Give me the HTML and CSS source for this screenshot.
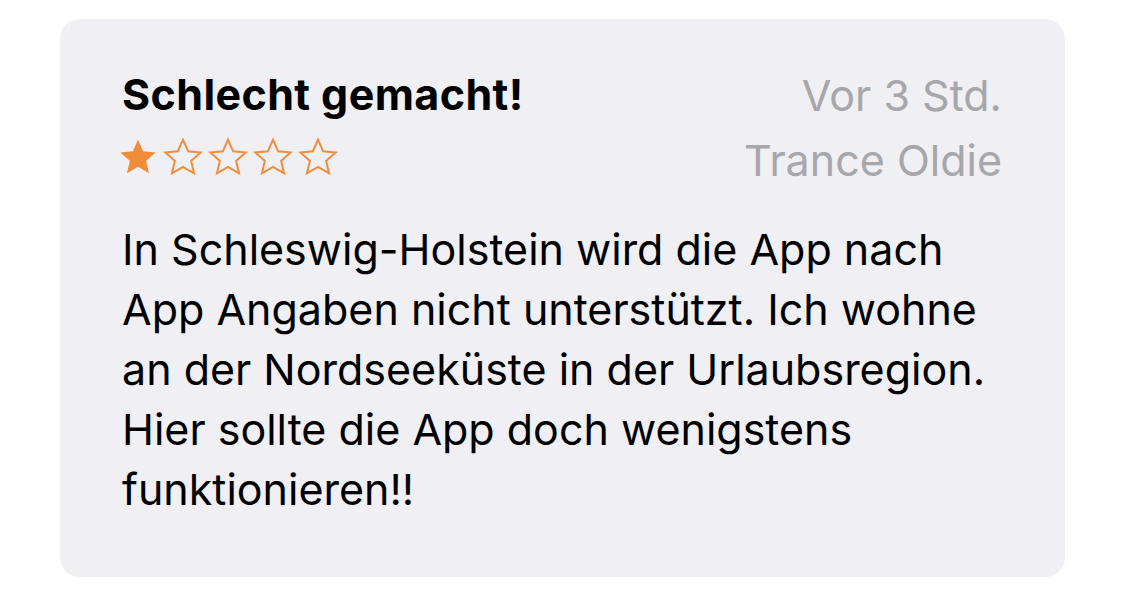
FILE: index.html
```html
<!DOCTYPE html>
<html lang="de">
<head>
    <meta charset="UTF-8">
    <meta name="viewport" content="width=device-width, initial-scale=1.0">
    <title>Bewertung</title>
    <link rel="stylesheet" href="styles.css">
</head>
<body>

    <div class="review">
        <!-- Header: title + stars on the left, date + author on the right -->
        <div class="review-head">
            <div class="review-left">
                <h2 class="review-title">Schlecht gemacht!</h2>
                <div class="stars">
                    <svg class="star" viewBox="0 0 24 24"><path class="full" d="M12 1.6l3.1 7 7.5.7-5.7 5 1.7 7.5L12 17.9l-6.6 3.9 1.7-7.5-5.7-5 7.5-.7z"/></svg>
                    <svg class="star" viewBox="0 0 24 24"><path class="empty" d="M12 1.6l3.1 7 7.5.7-5.7 5 1.7 7.5L12 17.9l-6.6 3.9 1.7-7.5-5.7-5 7.5-.7z"/></svg>
                    <svg class="star" viewBox="0 0 24 24"><path class="empty" d="M12 1.6l3.1 7 7.5.7-5.7 5 1.7 7.5L12 17.9l-6.6 3.9 1.7-7.5-5.7-5 7.5-.7z"/></svg>
                    <svg class="star" viewBox="0 0 24 24"><path class="empty" d="M12 1.6l3.1 7 7.5.7-5.7 5 1.7 7.5L12 17.9l-6.6 3.9 1.7-7.5-5.7-5 7.5-.7z"/></svg>
                    <svg class="star" viewBox="0 0 24 24"><path class="empty" d="M12 1.6l3.1 7 7.5.7-5.7 5 1.7 7.5L12 17.9l-6.6 3.9 1.7-7.5-5.7-5 7.5-.7z"/></svg>
                </div>
            </div>
            <div class="review-meta">
                <span class="review-date">Vor 3 Std.</span>
                <span class="review-author">Trance Oldie</span>
            </div>
        </div>

        <p class="review-body">In Schleswig-Holstein wird die App nach App Angaben nicht unterstützt. Ich wohne an der Nordseeküste in der Urlaubsregion. Hier sollte die App doch wenigstens funktionieren!!</p>
    </div>

</body>
</html>
```

FILE: styles.css
```css
/* Global styles */
body, html {
    margin: 0;
    padding: 0;
    background-color: #ffffff;
    font-family: Inter, "Noto Sans", sans-serif;
}

/* Review card */
.review {
    margin: 19px 0 0 60px;
    width: 1005px;
    height: 558px;
    box-sizing: border-box;
    padding: 48px 63px 0 62px;
    background-color: #efeff4;
    border-radius: 20px;
}

.review-head {
    display: flex;
    justify-content: space-between;
}

.review-title {
    margin: 2px 0 0 0;
    font-size: 43px;
    font-weight: 700;
    letter-spacing: 0.4px;
    line-height: 50px;
    color: #000000;
}

/* Star rating */
.stars {
    display: flex;
    gap: 5px;
    margin: 18px 0 0 -4px;
}

.star {
    display: block;
    width: 40px;
    height: 40px;
}

.star .full {
    fill: #f28c38;
}

.star .empty {
    fill: none;
    stroke: #f28c38;
    stroke-width: 1.2;
}

.review-meta {
    display: flex;
    flex-direction: column;
    align-items: flex-end;
    font-size: 43px;
    line-height: 65px;
    color: #a6a6ab;
    margin-top: -4px;
}

/* Review text */
.review-body {
    margin: 26px 0 0 0;
    font-size: 43px;
    line-height: 60px;
    color: #000000;
}
```
